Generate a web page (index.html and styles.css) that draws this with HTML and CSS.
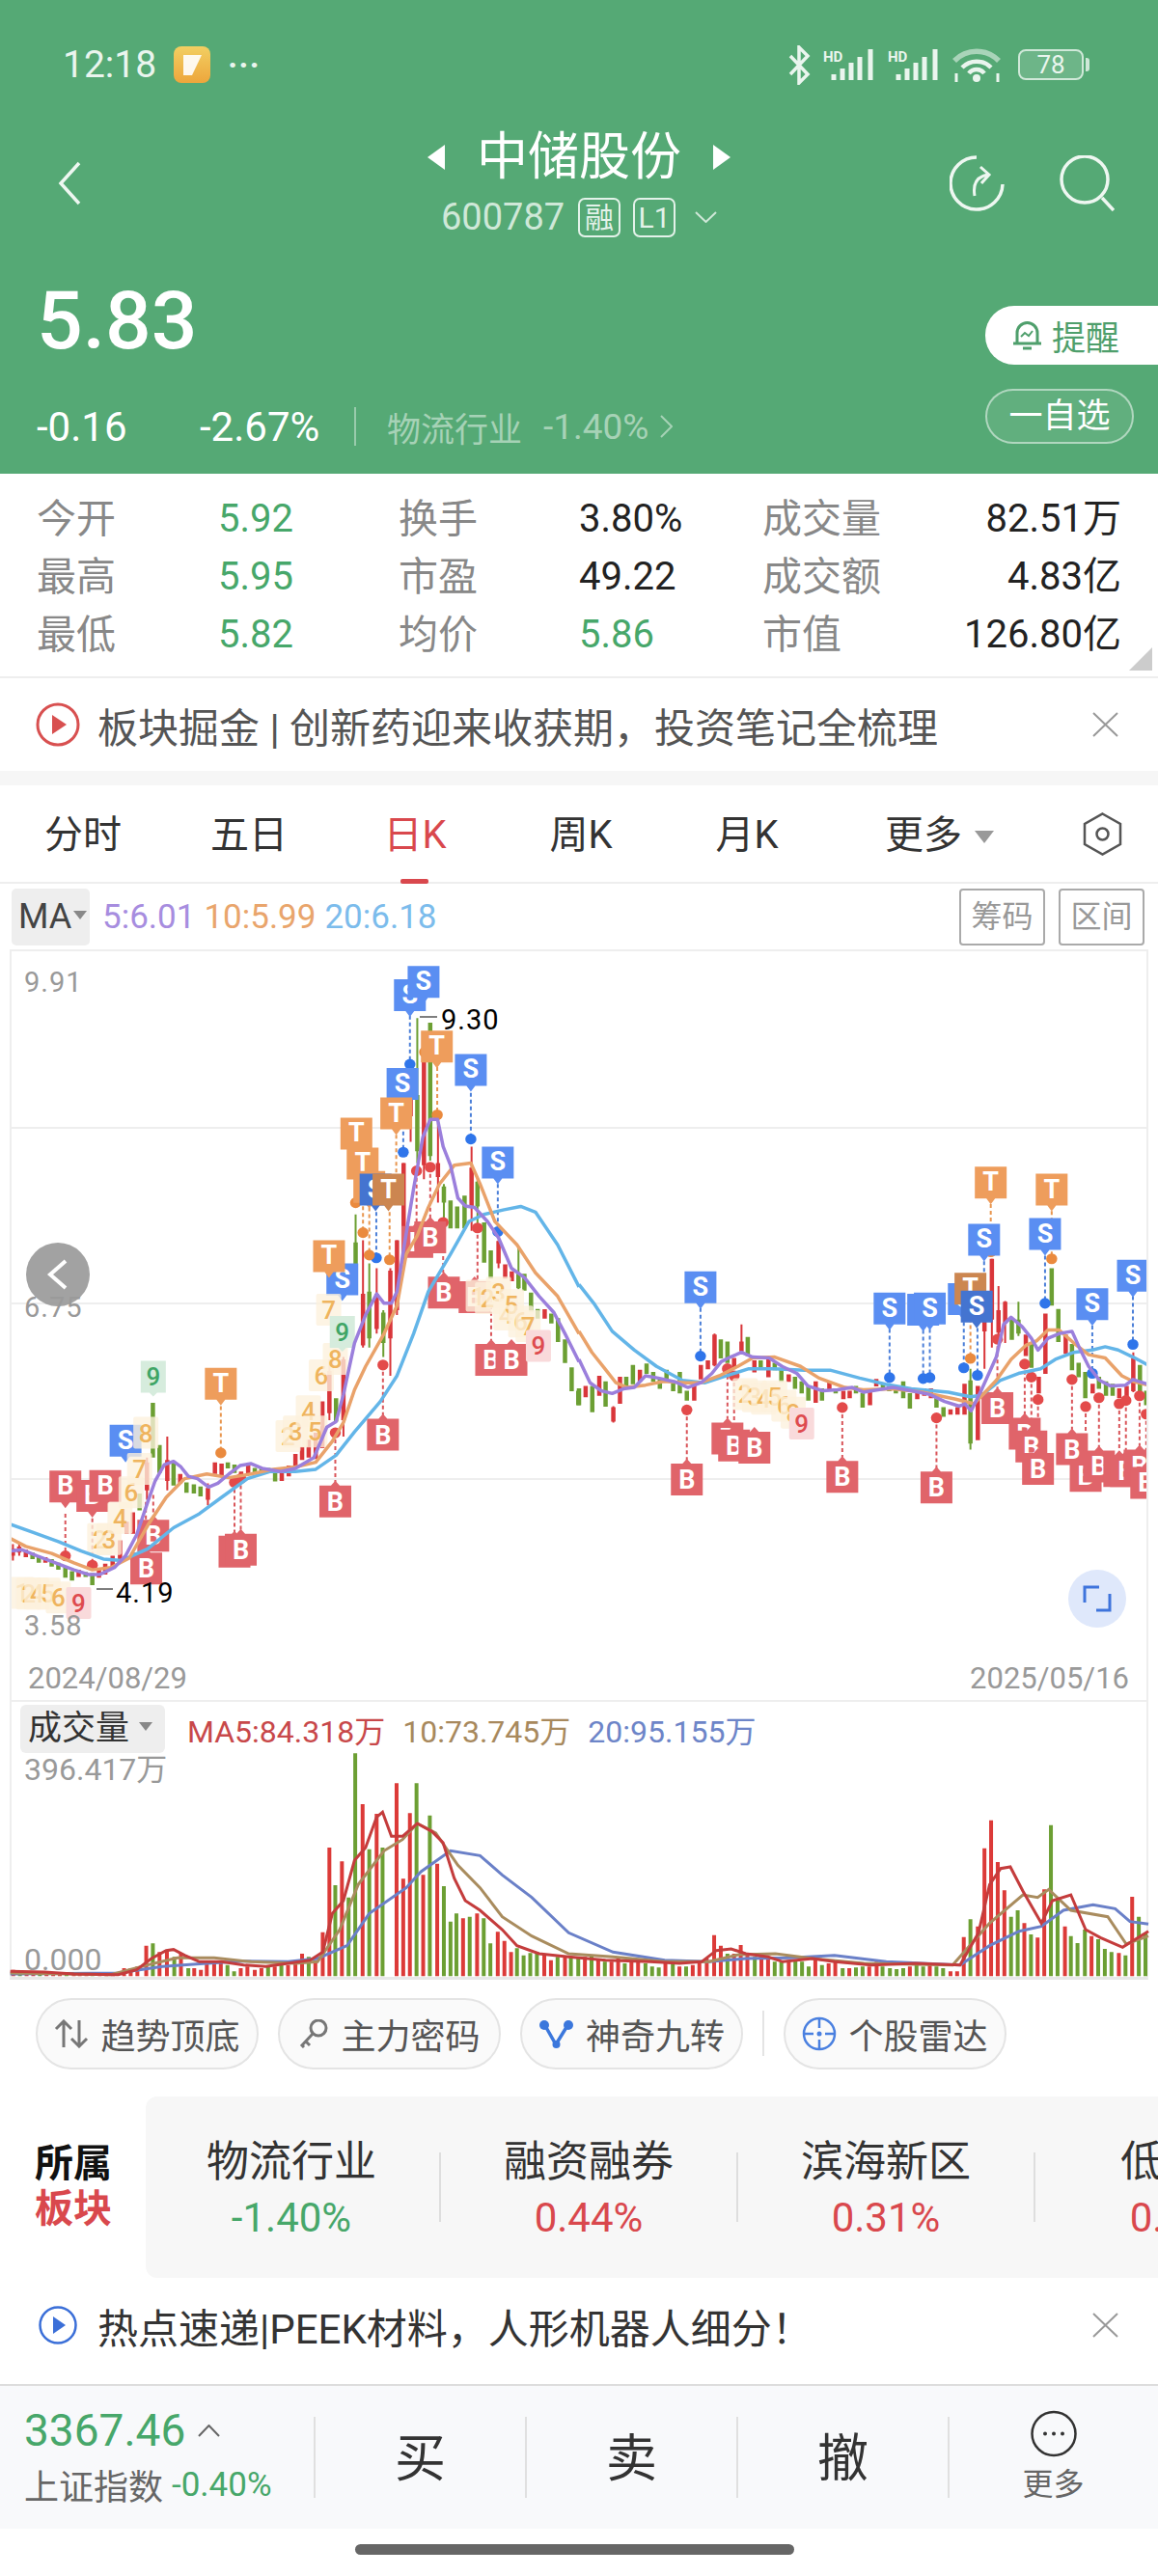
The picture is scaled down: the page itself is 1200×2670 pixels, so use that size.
FILE: index.html
```html
<!DOCTYPE html>
<html lang="zh-CN">
<head>
<meta charset="utf-8">
<title>中储股份</title>
<link rel="stylesheet" href="styles.css">
</head>
<body>
<div class="page">
<header class="header">
  <div class="status">
    <span class="time">12:18</span>
    <svg class="appicon" width="38" height="38" viewBox="0 0 38 38"><defs><linearGradient id="ag" x1="0" y1="0" x2="0" y2="1"><stop offset="0" stop-color="#f2cf62"/><stop offset="1" stop-color="#eda63c"/></linearGradient></defs><rect width="38" height="38" rx="8" fill="url(#ag)"/><path d="M10 9h19l-10 21h-9z" fill="#fff" opacity=".9"/></svg>
    <span class="sdots">···</span>
    <div class="sicons">
      <svg width="25" height="41" viewBox="0 0 25 41" class="si"><path d="M3 11l18 19-9 9V2l9 9L3 30" fill="none" stroke="#eaf5ee" stroke-width="3.500"/></svg>
      <svg width="55" height="32" viewBox="0 0 55 32" class="si"><text x="0" y="13" class="hd">HD</text><path d="M11 26v6M20 20v12M29 14v18M38 8v24M49 0v32" stroke="#eaf5ee" stroke-width="5" fill="none"/></svg>
      <svg width="55" height="32" viewBox="0 0 55 32" class="si"><text x="0" y="13" class="hd">HD</text><path d="M11 26v6M20 20v12M29 14v18M38 8v24M49 0v32" stroke="#eaf5ee" stroke-width="5" fill="none"/></svg>
      <svg width="50" height="37" viewBox="0 0 50 37" class="si"><path d="M2 14a32 32 0 0 1 46 0" fill="none" stroke="#a9d4b9" stroke-width="5.500"/><path d="M10 21a21 21 0 0 1 30 0M17 27a10 10 0 0 1 16 0" fill="none" stroke="#eaf5ee" stroke-width="4.500"/><circle cx="25" cy="32" r="4" fill="#eaf5ee"/><path d="M4 27v9M47 27v9" stroke="#eaf5ee" stroke-width="3"/></svg>
      <div class="battery"><span class="batt-num">78</span></div>
      <span class="batt-tip"></span>
    </div>
  </div>
  <nav class="nav">
    <svg class="back" width="24" height="46" viewBox="0 0 24 46"><path d="M22 2L3 23l19 21" fill="none" stroke="#eef7f1" stroke-width="3.500"/></svg>
    <div class="nav-center">
      <div class="title-row"><span class="tri-l"></span><h1 class="title">中储股份</h1><span class="tri-r"></span></div>
      <div class="sub-row"><span class="code">600787</span><span class="tag tag-cn">融</span><span class="tag">L1</span><svg class="subchev" width="23" height="12" viewBox="0 0 23 12"><path d="M1 1l10.500 10L22 1" fill="none" stroke="#cfe8d8" stroke-width="2"/></svg></div>
    </div>
    <div class="nav-icons">
      <svg width="57" height="58" viewBox="0 0 57 58"><path d="M28 2a27 27 0 1 0 27 28" fill="none" stroke="#eef7f1" stroke-width="3.500"/><path d="M26 42c-2-12 2-20 14-22M32 12l9 8-8 9" fill="none" stroke="#eef7f1" stroke-width="3"/></svg>
      <svg width="58" height="58" viewBox="0 0 58 58"><circle cx="27" cy="25" r="24" fill="none" stroke="#eef7f1" stroke-width="3.500"/><path d="M45 44l12 13" stroke="#eef7f1" stroke-width="3.500"/></svg>
    </div>
  </nav>
  <div class="quote">
    <div class="quote-left">
      <div class="price">5.83</div>
      <div class="change"><span class="chg1">-0.16</span><span class="chg2">-2.67%</span><span class="chg-div"></span><span class="ind">物流行业</span><span class="ind-pct">-1.40%</span><svg width="13" height="26" viewBox="0 0 13 26"><path d="M1 2l11 11L1 24" fill="none" stroke="#a6d2b6" stroke-width="2"/></svg></div>
    </div>
    <div class="quote-right">
      <div class="remind"><svg width="33" height="33" viewBox="0 0 33 33"><path d="M6 25V14a10 10 0 0 1 21 0v11M2 25h29M12 30h9" fill="none" stroke="#4f9f6c" stroke-width="3"/><path d="M10 18l4-4 4 3 4-5" fill="none" stroke="#4f9f6c" stroke-width="2"/></svg><span>提醒</span></div>
      <div class="watch">一自选</div>
    </div>
  </div>
</header>

<section class="stats">
  <span class="lb">今开</span><span class="val down">5.92</span><span class="lb">换手</span><span class="val">3.80%</span><span class="lb">成交量</span><span class="val end">82.51万</span>
  <span class="lb">最高</span><span class="val down">5.95</span><span class="lb">市盈</span><span class="val">49.22</span><span class="lb">成交额</span><span class="val end">4.83亿</span>
  <span class="lb">最低</span><span class="val down">5.82</span><span class="lb">均价</span><span class="val down">5.86</span><span class="lb">市值</span><span class="val end">126.80亿</span>
  <span class="corner"></span>
</section>

<section class="news news-top">
  <svg width="46" height="46" viewBox="0 0 46 46"><circle cx="23" cy="23" r="21" fill="none" stroke="#d85050" stroke-width="3"/><path d="M17 13l15 10-15 10z" fill="#d85050"/></svg>
  <span class="news-text">板块掘金 | 创新药迎来收获期，投资笔记全梳理</span>
  <svg class="close" width="27" height="26" viewBox="0 0 27 26"><path d="M1 1l25 24M26 1L1 25" stroke="#999" stroke-width="2" fill="none"/></svg>
</section>
<div class="gap"></div>

<div class="tabs">
  <span class="tab">分时</span><span class="tab">五日</span><span class="tab on">日K</span><span class="tab">周K</span><span class="tab">月K</span>
  <span class="tab more">更多<i class="caret"></i></span>
  <svg class="hex" width="41" height="45" viewBox="0 0 41 45"><path d="M20.500 1.500L39 12v21L20.500 43.500 2 33V12z" fill="none" stroke="#555" stroke-width="2.500"/><circle cx="20.500" cy="22.500" r="6" fill="none" stroke="#555" stroke-width="2.500"/></svg>
</div>

<div class="ma-row">
  <span class="ma-box">MA<i class="caret-s"></i></span>
  <span class="ma m5">5:6.01</span><span class="ma m10">10:5.99</span><span class="ma m20">20:6.18</span>
  <span class="btn-box first">筹码</span><span class="btn-box">区间</span>
</div>

<section class="frame">
<svg class="kchart" width="1176" height="730" viewBox="12 986 1176 730">
  <defs>
    <g id="S"><g transform="scale(2.613,2.063)"><path class="mS" d="M-16.500 0h33v33h-12l-4.500 6-4.500-6h-12z"/><text class="mt" y="25">S</text></g></g>
    <g id="Sd"><g transform="scale(2.613,2.063)"><path class="mSd" d="M-16.500 0h33v33h-12l-4.500 6-4.500-6h-12z"/><text class="mt" y="25">S</text></g></g>
    <g id="T"><g transform="scale(2.613,2.063)"><path class="mT" d="M-16.500 0h33v33h-12l-4.500 6-4.500-6h-12z"/><text class="mt" y="25">T</text></g></g>
    <g id="Td"><g transform="scale(2.613,2.063)"><path class="mTd" d="M-16.500 0h33v33h-12l-4.500 6-4.500-6h-12z"/><text class="mt" y="25">T</text></g></g>
    <g id="B"><g transform="scale(2.613,2.063)"><path class="mB" d="M-16.500 0h12l4.500-5 4.500 5h12v33h-33z"/><text class="mt" y="26">B</text></g></g>
    <g id="Bn"><g transform="scale(2.613,2.063)"><path class="mB" d="M-16.500 0h33v33h-12l-4.500 6-4.500-6h-12z"/><text class="mt" y="25">B</text></g></g>
    <g id="dB"><ellipse rx="15" ry="11.500" class="dotB"/></g>
    <g id="dO"><ellipse rx="15" ry="11.500" class="dotO"/></g>
    <g id="dR"><ellipse rx="15" ry="11.500" class="dotR"/></g>
    <g id="n1"><g transform="scale(2.613,2.063)"><rect class="td" x="-13" width="26" height="33" rx="2"/><text class="tdt" y="26">1</text></g></g>
    <g id="n2"><g transform="scale(2.613,2.063)"><rect class="td" x="-13" width="26" height="33" rx="2"/><text class="tdt" y="26">2</text></g></g>
    <g id="n3"><g transform="scale(2.613,2.063)"><rect class="td" x="-13" width="26" height="33" rx="2"/><text class="tdt" y="26">3</text></g></g>
    <g id="n4"><g transform="scale(2.613,2.063)"><rect class="td" x="-13" width="26" height="33" rx="2"/><text class="tdt" y="26">4</text></g></g>
    <g id="n5"><g transform="scale(2.613,2.063)"><rect class="td" x="-13" width="26" height="33" rx="2"/><text class="tdt" y="26">5</text></g></g>
    <g id="n6"><g transform="scale(2.613,2.063)"><rect class="td" x="-13" width="26" height="33" rx="2"/><text class="tdt" y="26">6</text></g></g>
    <g id="n7"><g transform="scale(2.613,2.063)"><rect class="td" x="-13" width="26" height="33" rx="2"/><text class="tdt" y="26">7</text></g></g>
    <g id="n8"><g transform="scale(2.613,2.063)"><rect class="td" x="-13" width="26" height="33" rx="2"/><text class="tdt" y="26">8</text></g></g>
    <g id="p9"><g transform="scale(2.613,2.063)"><rect class="tdp" x="-13" width="26" height="33" rx="2"/><text class="tdt9r" y="26">9</text></g></g>
    <g id="g9"><g transform="scale(2.613,2.063)"><path class="tdg" d="M-13 0h26v33h-9l-4 4-4-4h-9z"/><text class="tdt9g" y="26">9</text></g></g>
  </defs>
  <path class="grid" d="M10 1169H1200M10 1351H1200M10 1533H1200"/>

  <!-- left half of the candles, markers and moving averages -->
  <g transform="translate(0,980) scale(.38268,.48473)">
    <path class="wick-r" d="M35 1280V1315M52 1275V1305M398 1095V1185M453 1050V1165M563 1150V1197M892 885V1015M930 880V1050M983 630V860M1020 690V830M1057 690V920M1075 630V790M1093 465V680M1112 270V420M1148 200V500M1186 380V550M1277 430V610M1350 630V690"/>
    <path class="body-r" d="M35 1290V1305M52 1285V1298M70 1292V1308M123 1308V1320M213 1335V1350M268 1335V1352M285 1322V1345M305 1305V1330M325 1272V1318M343 1232V1258M360 1212V1258M398 1105V1165M453 1100V1145M488 1130V1150M563 1160V1185M582 1105V1130M600 1108V1133M653 1125V1145M672 1112V1130M763 1125V1145M782 1112V1135M800 1087V1115M818 1072V1100M836 1057V1095M855 1042V1098M873 975V1075M892 910V1000M930 885V1015M983 745V855M1020 745V820M1057 695V840M1075 630V780M1093 465V640M1112 272V365M1148 240V470M1186 465V495M1277 475V560M1350 632V680M1368 682V712M1386 697V718M1475 778V798"/>
    <path class="wick-g" d="M963 575V720M1000 680V860M1038 780V880M1130 155V465M1165 165V460M1202 510V590M1293 500V600M1404 645V735"/>
    <path class="body-g" d="M88 1298V1312M105 1306V1320M140 1312V1328M158 1320V1335M177 1328V1352M195 1338V1358M232 1340V1350M250 1342V1368M378 1172V1208M414 978V1095M432 1068V1128M470 1105V1155M505 1148V1170M525 1152V1172M543 1157V1178M617 1105V1118M635 1110V1128M690 1117V1128M708 1117V1128M727 1117V1128M745 1118V1146M910 968V1018M963 635V690M1000 740V840M1038 785V850M1130 320V440M1165 165V450M1202 515V550M1220 545V605M1238 558V605M1258 535V605M1293 505V558M1311 592V678M1329 652V712M1404 702V733M1420 702V738M1438 742V783M1456 777V798M1493 787V808M1511 797V848M1530 842V893M1548 902V953M1566 952V983"/>
    <path class="dash-b" d="M1110 150V254M1092 340V442M1275 315V414M1348 510V612M1019 570V668"/>
    <path class="dash-o" d="M598 985V1085M1184 260V362M1073 405V505M965 450V550M983 500V614M1000 560V662M1055 570V672"/>
    <path class="dash-r" d="M177 1215V1305M250 1225V1325M635 1148V1255M652 1140V1250M908 1042V1148M1037 897V1005M1128 482V590M1165 474V585M1200 592V700M1293 604V715M1330 740V845M415 1175V1220M395 1190V1290"/>
    <use href="#dR" x="177" y="1305"/><use href="#dR" x="250" y="1325"/><use href="#dR" x="635" y="1148"/><use href="#dR" x="652" y="1140"/><use href="#dR" x="908" y="1042"/><use href="#dR" x="1037" y="897"/><use href="#dR" x="1128" y="482"/><use href="#dR" x="1165" y="474"/><use href="#dR" x="1200" y="592"/><use href="#dR" x="1293" y="604"/>
    <use href="#dB" x="1110" y="254"/><use href="#dB" x="1092" y="442"/><use href="#dB" x="1275" y="414"/><use href="#dB" x="1348" y="612"/><use href="#dB" x="1019" y="668"/>
    <use href="#dO" x="598" y="1085"/><use href="#dO" x="1184" y="362"/><use href="#dO" x="1073" y="505"/><use href="#dO" x="963" y="550"/><use href="#dO" x="983" y="614"/><use href="#dO" x="1000" y="662"/><use href="#dO" x="1055" y="672"/><use href="#dO" x="1150" y="228"/>
    <use href="#Bn" x="177" y="1123"/><use href="#Bn" x="250" y="1143"/><use href="#Bn" x="285" y="1122"/>
    <use href="#B" x="415" y="1228"/><use href="#B" x="396" y="1298"/><use href="#B" x="635" y="1262"/><use href="#B" x="652" y="1258"/><use href="#B" x="908" y="1155"/><use href="#B" x="1037" y="1012"/><use href="#B" x="1130" y="600"/><use href="#B" x="1165" y="590"/><use href="#B" x="1202" y="708"/><use href="#B" x="1285" y="718"/><use href="#B" x="1330" y="852"/><use href="#B" x="1385" y="852"/>
    <use href="#S" x="340" y="1025"/><use href="#S" x="1110" y="72"/><use href="#S" x="1147" y="44"/><use href="#S" x="1090" y="262"/><use href="#S" x="1275" y="232"/><use href="#S" x="1348" y="430"/><use href="#S" x="927" y="680"/>
    <use href="#T" x="891" y="630"/><use href="#T" x="598" y="903"/><use href="#T" x="1073" y="325"/><use href="#T" x="1183" y="182"/><use href="#T" x="965" y="368"/><use href="#T" x="982" y="432"/><use href="#T" x="1000" y="482"/>
    <use href="#Sd" x="1017" y="488"/><use href="#Td" x="1052" y="488"/>
    <use href="#n1" x="60" y="1350"/><use href="#n2" x="78" y="1352"/><use href="#n4" x="100" y="1352"/><use href="#n5" x="130" y="1352"/><use href="#n6" x="158" y="1360"/><use href="#p9" x="213" y="1372"/>
    <use href="#n2" x="270" y="1235"/><use href="#n3" x="295" y="1235"/><use href="#n4" x="325" y="1190"/><use href="#n6" x="355" y="1135"/><use href="#n7" x="378" y="1085"/><use href="#n8" x="395" y="1008"/><use href="#g9" x="415" y="888"/>
    <use href="#n2" x="780" y="1015"/><use href="#n3" x="800" y="1005"/><use href="#n4" x="835" y="962"/><use href="#n5" x="853" y="1005"/><use href="#n6" x="870" y="885"/><use href="#n7" x="890" y="745"/><use href="#n8" x="908" y="850"/><use href="#g9" x="927" y="792"/>
    <use href="#n1" x="1295" y="715"/><use href="#n2" x="1320" y="720"/><use href="#n3" x="1350" y="708"/><use href="#n4" x="1370" y="755"/><use href="#n5" x="1385" y="735"/><use href="#n6" x="1410" y="770"/><use href="#n7" x="1430" y="780"/><use href="#p9" x="1458" y="822"/>
    <polyline class="ln-blue" points="26,1237 90,1255 160,1275 220,1295 280,1312 330,1315 400,1290 470,1245 540,1215 600,1180 670,1140 730,1125 800,1125 855,1120 910,1090 960,1040 1030,975 1075,920 1120,830 1160,740 1220,660 1270,590 1310,575 1365,565 1410,558 1450,570 1510,640 1568,730"/>
    <polyline class="ln-orange" points="26,1267 70,1285 140,1300 200,1320 250,1335 300,1330 350,1310 400,1240 450,1180 500,1140 560,1130 620,1138 680,1130 740,1120 800,1115 855,1105 900,1060 930,1020 960,950 990,900 1040,830 1075,770 1100,660 1130,620 1160,560 1190,510 1230,470 1275,465 1300,510 1340,590 1400,640 1450,700 1510,750 1568,830"/>
    <polyline class="ln-purple" points="26,1295 60,1292 100,1305 150,1320 200,1335 240,1345 270,1345 310,1330 340,1305 370,1260 400,1190 420,1145 445,1110 470,1103 490,1115 510,1135 535,1140 565,1158 590,1150 620,1130 650,1112 680,1108 710,1118 760,1125 800,1118 850,1095 885,1030 910,1018 930,960 960,850 990,790 1020,745 1040,765 1060,765 1075,740 1095,640 1120,520 1145,410 1165,372 1185,372 1200,430 1220,470 1240,540 1260,557 1285,560 1320,590 1350,625 1385,690 1420,710 1460,750 1500,785 1530,830 1568,890"/>
  </g>

  <!-- right half -->
  <g transform="translate(600,980) scale(.38268,.48473)">
    <path class="wick-r" d="M93 985V1020M440 810V870M367 830V900M1098 800V905M1118 670V860M1136 728V850M1154 760V850M1501 870V955"/>
    <path class="body-r" d="M18 942V966M55 920V963M93 987V1018M111 922V980M165 907V933M312 937V973M330 897V928M349 887V906M367 832V898M420 882V903M440 847V868M475 887V913M513 882V923M568 917V933M641 932V978M678 934V953M716 952V970M733 952V968M788 947V983M805 927V943M916 957V970M935 947V963M953 947V968M1006 992V1003M1025 987V1003M1044 937V1003M1080 942V1058M1098 800V825M1118 670V800M1136 780V828M1154 762V808M1210 832V878M1245 922V958M1263 787V916M1318 832V873M1391 937V958M1463 947V968M1483 942V973M1501 882V953"/>
    <path class="wick-g" d="M1060 905V1078M1190 762V835"/>
    <path class="body-g" d="M0 947V983M36 942V998M72 932V986M128 922V943M146 897V938M183 894V916M201 912V933M219 927V948M237 907V933M255 932V953M273 912V958M292 952V973M384 842V883M402 847V893M457 837V878M492 887V903M530 892V908M548 907V933M585 922V948M603 932V958M621 942V973M658 947V973M695 947V958M750 942V958M768 957V988M823 937V948M840 942V953M858 947V958M878 932V968M896 957V990M968 967V988M987 987V1008M1060 930V1065M1172 797V843M1190 800V830M1225 852V903M1280 690V770M1298 777V848M1335 852V908M1353 892V923M1371 912V968M1408 922V948M1427 932V963M1445 937V963M1519 897V953M1536 952V983"/>
    <path class="dash-b" d="M329 775V878M841 820V924M932 822V926M950 820V924M1042 805V903M1097 675V778M1079 818V919M1262 663V765M1390 813V915M1500 750V853"/>
    <path class="dash-o" d="M1115 553V655M1280 568V670M1060 783V883"/>
    <path class="dash-r" d="M292 993V1100M402 905V1012M420 920V1027M713 988V1095M968 1010V1118M1133 842V948M1207 895V1003M1225 923V1030M1243 971V1078M1335 928V1035M1372 986V1092M1408 967V1073M1463 980V1085M1481 973V1085M1518 963V1070M1536 1002V1108"/>
    <use href="#dR" x="292" y="993"/><use href="#dR" x="402" y="905"/><use href="#dR" x="420" y="920"/><use href="#dR" x="713" y="988"/><use href="#dR" x="968" y="1010"/><use href="#dR" x="1133" y="842"/><use href="#dR" x="1207" y="895"/><use href="#dR" x="1225" y="923"/><use href="#dR" x="1243" y="971"/><use href="#dR" x="1335" y="928"/><use href="#dR" x="1372" y="986"/><use href="#dR" x="1408" y="967"/><use href="#dR" x="1463" y="980"/><use href="#dR" x="1481" y="973"/><use href="#dR" x="1518" y="963"/><use href="#dR" x="1536" y="1002"/>
    <use href="#dB" x="329" y="878"/><use href="#dB" x="841" y="924"/><use href="#dB" x="932" y="926"/><use href="#dB" x="950" y="924"/><use href="#dB" x="1042" y="903"/><use href="#dB" x="1097" y="778"/><use href="#dB" x="1079" y="919"/><use href="#dB" x="1262" y="765"/><use href="#dB" x="1390" y="915"/><use href="#dB" x="1500" y="853"/>
    <use href="#dO" x="1115" y="655"/><use href="#dO" x="1280" y="670"/><use href="#dO" x="1060" y="883"/>
    <use href="#B" x="292" y="1108"/><use href="#B" x="402" y="1020"/><use href="#B" x="420" y="1035"/><use href="#B" x="475" y="1040"/><use href="#B" x="713" y="1102"/><use href="#B" x="968" y="1125"/><use href="#B" x="1133" y="955"/><use href="#B" x="1207" y="1010"/><use href="#B" x="1225" y="1037"/><use href="#B" x="1243" y="1085"/><use href="#B" x="1335" y="1043"/><use href="#B" x="1372" y="1100"/><use href="#B" x="1408" y="1080"/><use href="#B" x="1463" y="1090"/><use href="#B" x="1481" y="1090"/><use href="#B" x="1518" y="1078"/><use href="#B" x="1536" y="1115"/>
    <use href="#S" x="329" y="697"/><use href="#S" x="841" y="742"/><use href="#S" x="932" y="745"/><use href="#S" x="950" y="742"/><use href="#S" x="1042" y="722"/><use href="#Td" x="1060" y="700"/><use href="#S" x="1097" y="595"/><use href="#S" x="1262" y="583"/><use href="#Sd" x="1077" y="738"/><use href="#S" x="1390" y="733"/><use href="#S" x="1500" y="672"/>
    <use href="#T" x="1115" y="473"/><use href="#T" x="1280" y="488"/>
    <use href="#n2" x="450" y="925"/><use href="#n3" x="475" y="930"/><use href="#n4" x="500" y="935"/><use href="#n5" x="530" y="930"/><use href="#n6" x="555" y="950"/><use href="#n8" x="580" y="965"/><use href="#p9" x="603" y="988"/>
    <polyline class="ln-blue" points="0,725 40,765 90,825 150,865 210,900 280,930 340,935 400,920 460,905 530,905 610,908 680,908 760,925 830,938 900,948 1000,955 1060,965 1090,962 1140,930 1190,915 1250,905 1290,885 1340,870 1390,865 1425,858 1460,865 1500,880 1540,897"/>
    <polyline class="ln-orange" points="0,825 35,870 70,905 100,935 130,945 180,940 230,932 290,935 330,935 380,920 430,900 470,882 530,880 600,900 650,925 720,945 770,950 850,948 930,955 1020,970 1070,980 1130,930 1170,885 1210,855 1240,845 1270,822 1300,822 1340,850 1380,875 1425,882 1470,920 1500,932 1540,940"/>
    <polyline class="ln-purple" points="0,885 30,935 60,952 90,958 120,948 150,945 180,920 215,925 260,933 295,945 330,935 360,915 385,890 410,880 440,870 470,880 515,882 550,900 590,915 620,942 660,952 700,950 740,945 770,955 810,950 850,945 900,952 950,960 990,975 1030,985 1045,980 1062,995 1090,950 1130,880 1150,810 1170,795 1200,815 1225,840 1243,865 1270,840 1300,830 1335,825 1355,860 1380,900 1410,930 1440,942 1480,940 1500,928 1540,938"/>
  </g>

  <text class="axis" x="25" y="1028">9.91</text>
  <text class="axis" x="25" y="1365">6.75</text>
  <text class="axis" x="25" y="1695">3.58</text>
  <path class="tick" d="M435 1054H453M100 1647H117"/>
  <text class="extreme" x="457" y="1067">9.30</text>
  <text class="extreme" x="120" y="1661">4.19</text>
  <circle cx="60" cy="1321" r="33" class="back-btn"/>
  <path class="back-chev" d="M68 1307L52 1321L68 1335"/>
  <circle cx="1137" cy="1657" r="30" class="full-btn"/>
  <path class="full-ico" d="M1124 1661V1645H1139M1150 1652V1669H1136"/>
</svg>
<div class="dates"><span>2024/08/29</span><span>2025/05/16</span></div>
</section>

<section class="vol">
  <div class="vol-legend">
    <span class="vol-box">成交量<i class="caret-s"></i></span>
    <span class="vl v5">MA5:84.318万</span><span class="vl v10">10:73.745万</span><span class="vl v20">20:95.155万</span>
  </div>
  <svg class="vchart" width="1176" height="230" viewBox="12 1820 1176 230">
    <g transform="translate(0,1740) scale(.76531,.33333)">
      <path class="bar-g" d="M27 925V915M54 925V915M90 925V917M125 925V917M207 925V823M236 925V865M255 925V900M308 925V890M317 925V910M363 925V895M381 925V890M418 925V865M454 925V642M472 925V680M481 925V232M500 925V530M518 925V525M564 925V325M582 925V425M601 925V645M610 925V755M618 925V730M636 925V740M655 925V745M664 925V823M700 925V838M709 925V860M718 925V853M727 925V850M755 925V865M773 925V865M783 925V865M801 925V860M819 925V880M846 925V885M874 925V885M883 925V895M892 925V898M911 925V880M929 925V895M985 925V855M1022 925V865M1049 925V880M1058 925V880M1077 925V878M1086 925V880M1095 925V895M1113 925V890M1141 925V900M1159 925V898M1168 925V895M1195 925V895M1205 925V900M1214 925V903M1223 925V900M1241 925V888M1250 925V895M1268 925V895M1277 925V900M1314 925V748M1369 925V740M1378 925V720M1396 925V795M1423 925V455M1432 925V690M1450 925V800M1459 925V822M1469 925V780M1487 925V810M1496 925V840M1505 925V850M1524 925V860M1542 925V740M1551 925V790"/>
      <path class="bar-r" d="M18 925V905M36 925V910M45 925V912M63 925V912M72 925V915M81 925V915M100 925V915M108 925V918M117 925V917M135 925V918M144 925V918M153 925V915M168 925V900M177 925V900M186 925V895M198 925V830M216 925V850M226 925V845M245 925V855M263 925V900M272 925V905M280 925V880M290 925V880M299 925V880M326 925V900M335 925V895M345 925V905M354 925V900M372 925V895M390 925V890M400 925V880M409 925V855M427 925V875M437 925V788M446 925V525M463 925V568M491 925V390M510 925V420M537 925V325M546 925V622M555 925V418M573 925V610M592 925V575M627 925V745M646 925V730M674 925V787M683 925V815M692 925V850M737 925V855M746 925V875M765 925V865M792 925V865M810 925V870M828 925V880M837 925V870M855 925V880M864 925V875M901 925V885M920 925V895M938 925V890M947 925V880M957 925V870M967 925V797M976 925V830M994 925V855M1003 925V828M1012 925V855M1031 925V860M1040 925V870M1068 925V875M1104 925V870M1122 925V885M1131 925V880M1150 925V900M1177 925V895M1187 925V880M1232 925V895M1259 925V885M1287 925V910M1296 925V910M1305 925V803M1324 925V770M1333 925V527M1342 925V440M1351 925V570M1360 925V658M1387 925V760M1405 925V805M1414 925V655M1442 925V770M1478 925V800M1515 925V853M1533 925V678"/>
      <polyline class="vl-blue" points="14,918 160,915 220,895 280,885 330,878 390,880 430,870 470,830 500,730 550,650 570,600 610,535 650,550 680,610 720,680 770,790 830,850 900,875 960,880 1010,870 1070,868 1130,860 1200,880 1300,890 1340,830 1380,785 1410,770 1440,720 1480,703 1510,715 1530,755 1555,763"/>
      <polyline class="vl-tan" points="14,915 150,920 200,890 240,868 290,868 340,880 400,885 430,880 460,780 485,640 520,535 545,500 565,450 590,480 620,580 650,650 680,740 720,800 770,855 830,865 900,880 960,880 1000,858 1050,855 1100,870 1170,885 1290,890 1340,760 1385,672 1405,680 1420,655 1450,720 1500,740 1525,825 1555,800"/>
      <polyline class="vl-red" points="14,910 60,912 100,918 160,920 185,905 205,870 225,845 235,842 250,860 270,880 300,880 330,890 360,895 390,885 420,875 437,850 450,730 465,690 480,565 495,525 510,430 518,415 530,490 545,490 565,450 585,475 600,510 615,620 630,690 650,720 680,780 700,830 730,855 770,865 820,875 880,880 920,885 950,880 970,845 990,840 1010,855 1040,865 1060,880 1100,870 1130,880 1180,890 1240,885 1300,890 1325,790 1340,640 1355,590 1368,585 1385,660 1410,760 1425,690 1450,672 1470,780 1490,805 1520,835 1555,785"/>
    </g>
    <text class="vaxis" x="25" y="1845">396.417万</text>
    <text class="vaxis" x="25" y="2042">0.000</text>
  </svg>
</section>

<div class="pills">
  <span class="pill"><svg width="36" height="30" viewBox="0 0 36 30"><path d="M10 29V2M2 10l8-8 8 8M26 1v27M18 20l8 8 8-8" fill="none" stroke="#777" stroke-width="3"/></svg>趋势顶底</span>
  <span class="pill"><svg width="32" height="30" viewBox="0 0 32 30"><circle cx="21" cy="9" r="8" fill="none" stroke="#777" stroke-width="3"/><path d="M15 15L3 28M7 22l5 5M3 26l3 3" fill="none" stroke="#777" stroke-width="3"/></svg>主力密码</span>
  <span class="pill"><svg width="37" height="30" viewBox="0 0 37 30"><path d="M6 5l12 21L31 5" fill="none" stroke="#3b77dc" stroke-width="3.500"/><circle cx="6" cy="6" r="5" fill="#3b77dc"/><circle cx="31" cy="6" r="5" fill="#3b77dc"/><circle cx="18.500" cy="26" r="4" fill="#3b77dc"/></svg>神奇九转</span>
  <span class="pill-div"></span>
  <span class="pill"><svg width="36" height="36" viewBox="0 0 36 36"><circle cx="18" cy="18" r="16" fill="none" stroke="#4a80e0" stroke-width="2.500"/><path d="M18 2v10M18 24v10M2 18h10M24 18h10" stroke="#4a80e0" stroke-width="2.500"/><circle cx="18" cy="18" r="2.500" fill="#4a80e0"/></svg>个股雷达</span>
</div>

<section class="sector">
  <div class="sector-label"><b class="sl1">所属</b><b class="sl2">板块</b></div>
  <div class="sector-card">
    <div class="sitem"><span class="sname">物流行业</span><span class="spct down">-1.40%</span></div>
    <div class="sitem"><span class="sname">融资融券</span><span class="spct up">0.44%</span></div>
    <div class="sitem"><span class="sname">滨海新区</span><span class="spct up">0.31%</span></div>
    <div class="sitem last"><span class="sname">低价股</span><span class="spct up">0.58%</span></div>
  </div>
</section>

<section class="news news-bottom">
  <svg width="40" height="40" viewBox="0 0 40 40"><circle cx="20" cy="20" r="18.500" fill="none" stroke="#3b6fd8" stroke-width="2.500"/><path d="M15 11l13 9-13 9z" fill="#3b6fd8"/></svg>
  <span class="news-text dark">热点速递|PEEK材料，人形机器人细分！</span>
  <svg class="close" width="27" height="26" viewBox="0 0 27 26"><path d="M1 1l25 24M26 1L1 25" stroke="#999" stroke-width="2" fill="none"/></svg>
</section>

<footer class="bottom">
  <div class="index">
    <div class="index-top"><span class="idx-val">3367.46</span><svg width="23" height="13" viewBox="0 0 23 13"><path d="M1 12L11.500 1 22 12" fill="none" stroke="#666" stroke-width="2"/></svg></div>
    <div class="index-btm"><span class="idx-name">上证指数</span><span class="idx-pct">-0.40%</span></div>
  </div>
  <div class="act">买</div><div class="act">卖</div><div class="act">撤</div>
  <div class="act more-act"><svg width="48" height="49" viewBox="0 0 48 49"><circle cx="24" cy="24.500" r="22.500" fill="none" stroke="#333" stroke-width="2.500"/><circle cx="15" cy="24.500" r="2" fill="#333"/><circle cx="24" cy="24.500" r="2" fill="#333"/><circle cx="33" cy="24.500" r="2" fill="#333"/></svg><span class="more-t">更多</span></div>
</footer>
<div class="home"><span class="home-bar"></span></div>
</div>
</body>
</html>
```

FILE: styles.css
```css
* { box-sizing: border-box; }
html, body { margin: 0; padding: 0; background: #fff; }
body { font-family: Roboto, "Noto Sans CJK SC", sans-serif; color: #333; }
.page { width: 1200px; height: 2670px; overflow: hidden; }
i { font-style: normal; }

/* header */
.header { height: 491px; background: #55a975; color: #fff; }
.status { height: 134px; display: flex; align-items: center; padding-left: 65px; }
.time { font-size: 39px; color: #eaf5ee; width: 115px; }
.appicon { display: block; }
.sdots { font-size: 34px; color: #eaf5ee; margin-left: 18px; letter-spacing: 1px; line-height: 1; font-weight: 700; }
.sicons { margin-left: auto; display: flex; align-items: center; padding-right: 71px; }
.si { display: block; margin-right: 12px; }
.hd { font: 700 15px Roboto, sans-serif; fill: #eaf5ee; }
.battery { width: 68px; height: 32px; border: 2px solid #cfe8d8; border-radius: 8px; margin-left: 6px; background: rgba(255,255,255,.14); display: flex; align-items: center; justify-content: center; }
.batt-num { font-size: 26px; color: #eaf5ee; line-height: 1; }
.batt-tip { width: 4px; height: 14px; background: #cfe8d8; border-radius: 0 3px 3px 0; margin-left: 2px; }

.nav { height: 110px; display: grid; grid-template-columns: 1fr auto 1fr; align-items: center; padding: 0 45px 10px 45px; }
.back { display: block; margin-left: 15px; }
.nav-center { display: flex; flex-direction: column; align-items: center; }
.title-row { display: flex; align-items: center; height: 58px; }
.title { margin: 0; font-size: 53px; font-weight: 400; line-height: 58px; letter-spacing: 0; color: #fff; padding: 0 33px; }
.tri-l, .tri-r { display: block; width: 0; height: 0; border-top: 13px solid transparent; border-bottom: 13px solid transparent; }
.tri-l { border-right: 18px solid #fff; }
.tri-r { border-left: 18px solid #fff; }
.sub-row { display: flex; align-items: center; height: 42px; margin-top: 12px; color: #cfe8d8; }
.code { font-size: 38px; line-height: 42px; width: 142px; }
.tag { width: 44px; height: 41px; border: 2px solid #e3f2e9; border-radius: 7px; font-size: 30px; line-height: 37px; text-align: center; color: #e3f2e9; margin-right: 13px; }
.tag-cn { font-size: 30px; }
.subchev { display: block; margin-left: 7px; }
.nav-icons { display: flex; gap: 56px; justify-content: flex-end; }
.nav-icons svg { display: block; }

.quote { height: 247px; display: flex; justify-content: space-between; }
.quote-left { padding-left: 38px; }
.price { font-size: 84px; line-height: 90px; margin-top: 44px; font-weight: 500; color: #fff; }
.change { display: flex; align-items: center; height: 50px; margin-top: 39px; }
.chg1 { font-size: 42px; width: 169px; }
.chg2 { font-size: 42px; width: 160px; }
.chg-div { width: 2px; height: 40px; background: rgba(255,255,255,.4); margin-right: 32px; }
.ind { font-size: 35px; color: #a6d2b6; width: 162px; }
.ind-pct { font-size: 37px; color: #a6d2b6; width: 121px; }
.quote-right { width: 179px; display: flex; flex-direction: column; align-items: flex-start; }
.remind { margin-top: 73px; height: 61px; width: 179px; background: #fff; border-radius: 30px 0 0 30px; display: flex; align-items: center; padding-left: 27px; gap: 9px; color: #4f9f6c; font-size: 35px; }
.remind svg { display: block; }
.watch { margin-top: 25px; width: 154px; height: 57px; border: 2px solid rgba(255,255,255,.5); background: rgba(255,255,255,.07); border-radius: 29px; text-align: center; color: #fff; font-size: 35px; line-height: 53px; }

/* stats */
.stats { height: 212px; padding: 17px 38px 0 38px; display: grid; grid-template-columns: 188px 187px 187px 190px 1fr auto; grid-auto-rows: 60px; align-items: center; border-bottom: 2px solid #eee; position: relative; }
.lb { font-size: 41px; color: #888; line-height: 60px; }
.val { font-size: 40px; color: #222; line-height: 60px; }
.val.down { color: #47a76a; }
.val.end { justify-self: end; }
.corner { position: absolute; right: 6px; bottom: 6px; width: 0; height: 0; border-left: 24px solid transparent; border-bottom: 24px solid #ccc; }

/* news rows */
.news { display: flex; align-items: center; }
.news svg { display: block; }
.news-text { font-size: 42px; color: #555; margin-left: 18px; font-weight: 400; white-space: nowrap; }
.news-text.dark { color: #333; margin-left: 21px; }
.news-top { height: 96px; padding: 0 41px 0 37px; }
.close { margin-left: auto; }
.gap { height: 15px; background: #f6f6f6; }

/* tabs */
.tabs { height: 102px; border-bottom: 2px solid #eee; display: flex; align-items: center; padding-right: 37px; }
.tab { width: 172px; text-align: center; font-size: 40px; color: #333; line-height: 100px; padding-top: 3px; position: relative; }
.tab.on { color: #d9484d; }
.tab.on::after { content: ""; position: absolute; left: 71px; bottom: 0; width: 29px; height: 5px; background: #d9484d; border-radius: 2px; }
.tab.more { text-align: left; padding-left: 57px; width: 260px; white-space: nowrap; }
.caret { display: inline-block; margin-left: 13px; width: 0; height: 0; border-left: 10px solid transparent; border-right: 10px solid transparent; border-top: 13px solid #999; vertical-align: 5px; }
.hex { display: block; margin-left: auto; }

/* MA row */
.ma-row { height: 68px; display: flex; align-items: center; padding: 0 14px 0 12px; }
.ma-box { width: 81px; height: 59px; background: #eee; border-radius: 5px; font-size: 36px; color: #444; line-height: 59px; padding-left: 7px; white-space: nowrap; margin-right: 13px; }
.caret-s { display: inline-block; margin-left: 2px; width: 0; height: 0; border-left: 7px solid transparent; border-right: 7px solid transparent; border-top: 9px solid #888; vertical-align: 9px; }
.ma { font-size: 35px; margin-right: 9px; white-space: nowrap; }
.m5 { color: #a78ddf; }
.m10 { color: #e9a56c; }
.m20 { color: #7cbcec; }
.btn-box { width: 89px; height: 59px; border: 2px solid #aaa; border-radius: 4px; font-size: 32px; line-height: 54px; color: #999; text-align: center; margin-left: 14px; }
.btn-box.first { margin-left: auto; }

/* K chart */
.frame { margin: 0 10px; border: 2px solid #eee; border-bottom: 0; height: 778px; }
.kchart { display: block; }
.dates { display: flex; justify-content: space-between; padding: 2px 18px 0 17px; font-size: 31px; color: #999; line-height: 44px; }
.grid { stroke: #eee; stroke-width: 2; fill: none; }
.wick-r, .body-r, .wick-g, .body-g, .dash-b, .dash-o, .dash-r, .ln-blue, .ln-orange, .ln-purple, .bar-r, .bar-g, .vl-blue, .vl-tan, .vl-red { vector-effect: non-scaling-stroke; fill: none; }
.wick-r { stroke: #d9363a; stroke-width: 2; }
.body-r { stroke: #d9363a; stroke-width: 4.5; }
.wick-g { stroke: #6c9f33; stroke-width: 2; }
.body-g { stroke: #6c9f33; stroke-width: 4.5; }
.dash-b { stroke: #4b7fd8; stroke-width: 2; stroke-dasharray: 4 3; }
.dash-o { stroke: #e8964f; stroke-width: 2; stroke-dasharray: 4 3; }
.dash-r { stroke: #d9555a; stroke-width: 2; stroke-dasharray: 4 3; }
.ln-blue { stroke: #63b5e8; stroke-width: 3.5; stroke-linejoin: round; }
.ln-orange { stroke: #e9a26a; stroke-width: 3.5; stroke-linejoin: round; }
.ln-purple { stroke: #9b7fdc; stroke-width: 3.5; stroke-linejoin: round; }
.dotB { fill: #2f75ea; }
.dotO { fill: #ea8a3e; }
.dotR { fill: #e34a4a; }
.mS { fill: #5a8ef2; }
.mSd { fill: #4474d0; }
.mT { fill: #ee9d5c; }
.mTd { fill: #cc8650; }
.mB { fill: #e0646a; }
.mt { font: 700 27px Roboto, sans-serif; fill: #fff; text-anchor: middle; }
.td { fill: #fdf1dc; opacity: .78; }
.tdp { fill: #f9dadb; }
.tdg { fill: #d6ecdd; }
.tdt { font: 500 26px Roboto, sans-serif; fill: #efb45e; text-anchor: middle; }
.tdt9r { font: 500 26px Roboto, sans-serif; fill: #de4b4f; text-anchor: middle; }
.tdt9g { font: 500 26px Roboto, sans-serif; fill: #3fa566; text-anchor: middle; }
.axis { font: 29px Roboto, sans-serif; fill: #999; letter-spacing: 1px; }
.extreme { font: 29px Roboto, sans-serif; fill: #000; letter-spacing: 1px; }
.tick { stroke: #555; stroke-width: 1.5; fill: none; }
.back-btn { fill: #9a9a9a; opacity: .92; }
.back-chev { fill: none; stroke: #fff; stroke-width: 4; }
.full-btn { fill: #dfe8fb; }
.full-ico { fill: none; stroke: #3f74dc; stroke-width: 3; }

/* volume */
.vol { margin: 0 10px; height: 290px; border: 2px solid #eee; border-bottom: 3px solid #e8e8e8; }
.vol-legend { display: flex; align-items: center; height: 56px; padding-left: 9px; }
.vol-box { width: 150px; height: 50px; background: #eee; border-radius: 6px; font-size: 35px; color: #333; line-height: 50px; padding-left: 8px; white-space: nowrap; margin-right: 23px; }
.vol-box .caret-s { margin-left: 10px; }
.vl { font-size: 32px; margin-right: 18px; white-space: nowrap; }
.v5 { color: #c8484a; }
.v10 { color: #a8895d; }
.v20 { color: #6d85c8; }
.vchart { display: block; overflow: visible; }
.bar-r { stroke: #dc3a38; stroke-width: 4; }
.bar-g { stroke: #6c9f33; stroke-width: 4; }
.vl-blue { stroke: #6a80c8; stroke-width: 3; }
.vl-tan { stroke: #a98c5e; stroke-width: 3; }
.vl-red { stroke: #c43c3c; stroke-width: 3; }
.vaxis { font: 32px Roboto, "Noto Sans CJK SC", sans-serif; fill: #999; }

/* pills */
.pills { height: 121px; padding: 19px 0 0 37px; display: flex; align-items: flex-start; gap: 20px; }
.pill { width: 231px; height: 74px; border: 2px solid #e4e4e4; background: #fafafa; border-radius: 37px; display: flex; align-items: center; justify-content: center; gap: 12px; font-size: 36px; color: #555; white-space: nowrap; }
.pill svg { display: block; }
.pill-div { width: 2px; height: 47px; background: #e4e4e4; margin-top: 13px; }

/* sector */
.sector { height: 188px; display: flex; }
.sector-label { width: 151px; padding: 46px 0 0 36px; display: flex; flex-direction: column; }
.sl1, .sl2 { font-size: 40px; line-height: 47px; font-weight: 700; }
.sl1 { color: #111; }
.sl2 { color: #d9484d; }
.sector-card { flex: 1; background: #f7f7f7; border-radius: 12px 0 0 12px; display: flex; padding-top: 58px; overflow: hidden; align-items: flex-start; }
.sitem { flex: 0 0 308px; height: 72px; padding-top: 6px; border-right: 2px solid #dedede; display: flex; flex-direction: column; align-items: center; justify-content: center; overflow: visible; }
.sitem:first-child { margin-left: -2px; }
.sitem.last { border-right: 0; }
.sname { font-size: 44px; line-height: 58px; color: #333; white-space: nowrap; }
.spct { font-size: 42px; line-height: 58px; }
.spct.down { color: #47a76a; }
.spct.up { color: #d9484d; }

.news-bottom { height: 110px; padding: 0 41px 12px 40px; }

/* bottom bar */
.bottom { height: 150px; background: #f8f9fb; border-top: 2px solid #ddd; display: flex; align-items: center; }
.index { width: 327px; height: 84px; padding-left: 25px; display: flex; flex-direction: column; justify-content: center; border-right: 2px solid #e0e0e0; }
.index-top, .index-btm { display: flex; height: 56px; align-items: center; flex: none; white-space: nowrap; }
.idx-val { font-size: 46px; color: #47a76a; width: 180px; }
.idx-name { font-size: 36px; color: #666; width: 153px; }
.idx-pct { font-size: 35px; color: #47a76a; }
.act { width: 219px; height: 84px; font-size: 53px; line-height: 88px; text-align: center; color: #333; border-right: 2px solid #e0e0e0; }
.more-act { width: 215px; border-right: 0; display: flex; flex-direction: column; align-items: center; justify-content: flex-start; line-height: 1; }
.more-act svg { display: block; margin-top: -7px; flex: none; }
.more-t { font-size: 32px; color: #666; line-height: 40px; margin-top: 8px; }

.home { height: 49px; padding: 16px 0 0 368px; }
.home-bar { display: block; width: 455px; height: 11px; background: #666; border-radius: 6px; }
```
